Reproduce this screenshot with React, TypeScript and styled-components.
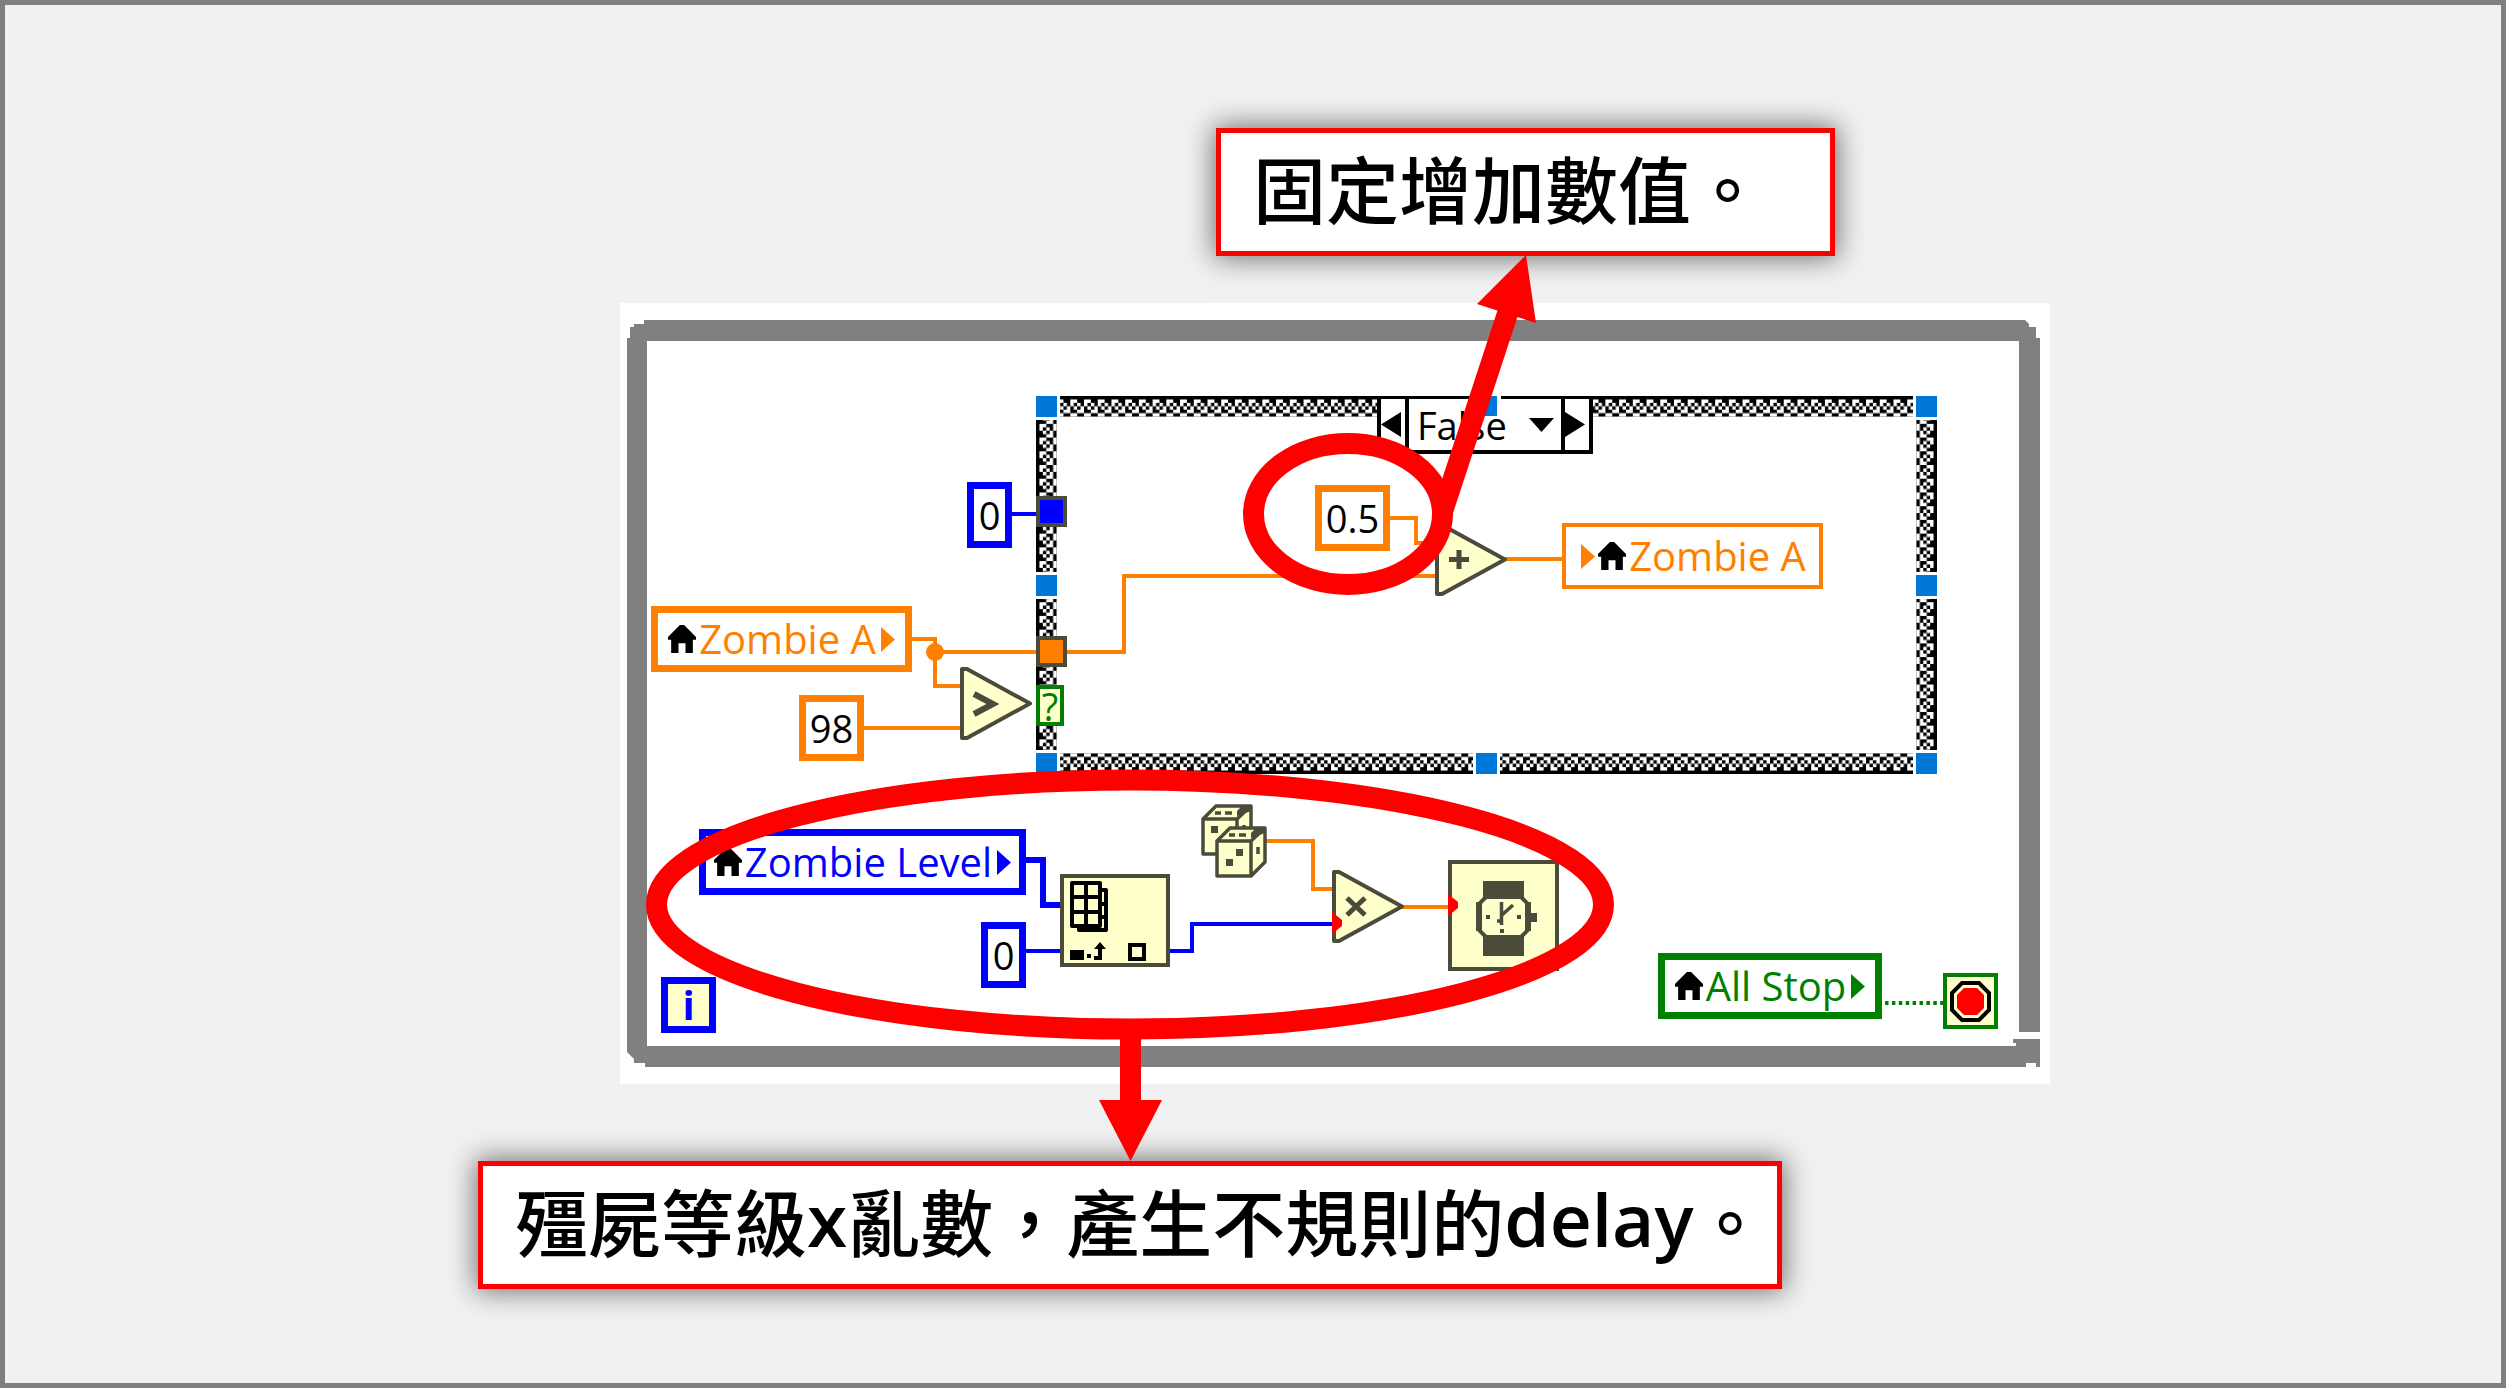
import React from "react";
import styled, { createGlobalStyle, css } from "styled-components";

const colors = {
  orange: "#ff7f00",
  blue: "#0000ff",
  green: "#007f00",
  ink: "#4b4b3c",
  cream: "#ffffcc",
  frame: "#808080",
  red: "#ff0000",
  handle: "#0078d7",
};

const GlobalStyle = createGlobalStyle`
  *, *::before, *::after { box-sizing: border-box; }
  body { margin: 0; background: #f1f1f1; }
`;

const Slide = styled.main`
  display: flex;
  justify-content: center;
  min-height: 100vh;
  padding: 123px 0 0;
  border: 5px solid #7f7f7f;
  background: #f1f1f1;
  overflow: hidden;
`;

const Stage = styled.div`
  display: flex;
  flex-direction: column;
  align-items: flex-start;
  padding-left: 22px;
`;

const Callout = styled.p<{ $wide?: boolean }>`
  display: flex;
  align-items: center;
  height: 128px;
  margin: 0;
  margin-left: ${(p) => (p.$wide ? 0 : 738)}px;
  padding: 0 ${(p) => (p.$wide ? 10 : 66)}px 12px 32px;
  border: 5px solid ${colors.red};
  background: #ffffff;
  box-shadow: 0 0 26px 2px rgba(0, 0, 0, 0.55);
  color: #000000;
  font-family: "Open Sans", "Noto Sans CJK TC", sans-serif;
  font-size: 73px;
  font-weight: 600;
  line-height: 100px;
  white-space: nowrap;
`;

const Cjk = styled.span`
  font-family: "Noto Sans CJK TC", sans-serif;
  font-weight: 500;
`;

const Diagram = styled.section`
  position: relative;
  width: 1430px;
  height: 781px;
  margin: 47px 0 77px 142px;
  background: #ffffff;
`;

const Drawing = styled.svg`
  position: absolute;
  inset: 0;
  width: 100%;
  height: 100%;
  overflow: visible;
  pointer-events: none;
`;

const nodeText = css`
  font-family: "Open Sans", sans-serif;
  line-height: 40px;
  white-space: nowrap;
`;

const Node = styled.div<{ $x: number; $y: number; $w: number; $color: string; $thin?: boolean }>`
  ${nodeText}
  position: absolute;
  left: ${(p) => p.$x}px;
  top: ${(p) => p.$y}px;
  display: flex;
  align-items: center;
  justify-content: center;
  gap: 3px;
  width: ${(p) => p.$w}px;
  height: 66px;
  border: ${(p) => (p.$thin ? 4 : 7)}px solid ${(p) => p.$color};
  background: #ffffff;
  color: ${(p) => p.$color};
  font-size: 40px;
`;

const Constant = styled(Node)`
  color: #000000;
  font-size: 38px;
`;

const Terminal = styled.div<{ $x: number; $y: number; $color: string; $border: number }>`
  ${nodeText}
  position: absolute;
  left: ${(p) => p.$x}px;
  top: ${(p) => p.$y}px;
  display: flex;
  align-items: center;
  justify-content: center;
  width: 55px;
  height: 56px;
  border: ${(p) => p.$border}px solid ${(p) => p.$color};
  background: ${colors.cream};
  color: ${(p) => p.$color};
  font-size: 40px;
  font-weight: 700;
`;

const CaseInput = styled.div`
  ${nodeText}
  position: absolute;
  left: 416px;
  top: 382px;
  display: flex;
  align-items: center;
  justify-content: center;
  width: 28px;
  height: 41px;
  border: 4px solid ${colors.green};
  background: ${colors.cream};
  color: ${colors.green};
  font-size: 38px;
`;

const Selector = styled.div`
  position: absolute;
  left: 757px;
  top: 93px;
  display: flex;
  width: 216px;
  height: 58px;
  border: 4px solid #000000;
  border-top-width: 3px;
  background: #ffffff;
`;

const Step = styled.button`
  display: flex;
  align-items: center;
  justify-content: flex-start;
  width: 24px;
  padding: 0;
  border: 0;
  background: #ffffff;
`;

const CaseField = styled.label`
  position: relative;
  display: flex;
  flex: 1;
  border: solid #000000;
  border-width: 0 4px;
`;

const CaseSelect = styled.select`
  ${nodeText}
  flex: 1;
  width: 100%;
  padding: 0 0 0 8px;
  border: 0;
  appearance: none;
  background: transparent;
  color: #000000;
  font-size: 38px;
`;

const DropMark = styled.svg`
  position: absolute;
  top: 19px;
  right: 7px;
`;

const House = () => (
  <svg width="28" height="28" viewBox="0 0 8 8" aria-hidden="true">
    <path d="M3.4 0h1.2L8 3.4v.8H7.1V8H5V5.2H3V8H.9V4.2H0v-.8z" fill="#000" />
  </svg>
);

const PlayMark = styled.svg`
  margin-left: 2px;
`;

const Play = ({ color }: { color: string }) => (
  <PlayMark width="14" height="25" viewBox="0 0 14 25" aria-hidden="true">
    <path d="M0 0L14 12.5L0 25z" fill={color} />
  </PlayMark>
);

const Amplifier = ({ x, y }: { x: number; y: number }) => (
  <path
    d={`M${x + 2} ${y + 2}h5L${x + 70} ${y + 36.5}L${x + 7} ${y + 71}h-5z`}
    fill={colors.cream}
    stroke={colors.ink}
    strokeWidth="4"
    strokeLinejoin="round"
  />
);

const Wire = ({ d, color, width = 4 }: { d: string; color: string; width?: number }) => (
  <path d={d} fill="none" stroke={color} strokeWidth={width} />
);

const Handle = ({ x, y }: { x: number; y: number }) => (
  <>
    <rect x={x - 3} y={y - 1} width="27" height="23" fill="#fff" />
    <rect x={x - 1} y={y - 3} width="23" height="27" fill="#fff" />
    <rect x={x} y={y} width="21" height="21" fill={colors.handle} />
  </>
);

const Die = ({ x, y, pips }: { x: number; y: number; pips: [number, number][] }) => (
  <g transform={`translate(${x} ${y})`} stroke={colors.ink} strokeWidth="3.5" strokeLinejoin="round">
    <path d="M2 15L15 2H50V36L36 50H2z" fill={colors.cream} />
    <path d="M2 15H36V50M36 15L50 2" fill="none" />
    <path d="M36 12V7l5-5h9v5z" fill={colors.ink} stroke="none" />
    <path d="M14 9H20M24 9H31" fill="none" />
    <path d="M43 21v7" fill="none" />
    {pips.map(([px, py]) => (
      <rect key={`${px}-${py}`} x={px} y={py} width="7" height="7" fill={colors.ink} stroke="none" />
    ))}
  </g>
);

const LoopFrame = () => (
  <path
    fill={colors.frame}
    d="M24 17H1405L1409 21V24H1416V35H1420V729H1399V38H27V743H1396V740H1393V736H1420V764H1416V760H1406V764H25V760H14V756L7 749V35H10V24H14V21H24z"
  />
);

const weave =
  "M0 0h4v1h-4zM0 1h2v1h-2zM1 2h1v1h-1zM3 2h1v1h-1zM0 3h1v1h-1zM2 3h1v1h-1zM2 4h2v1h-2zM0 5h2v1h-2z";

const CaseFrame = () => (
  <>
    <defs>
      <pattern id="weave" width="4" height="6" patternUnits="userSpaceOnUse">
        <path d={weave} fill="#000" />
      </pattern>
    </defs>
    <g fill="url(#weave)">
      <rect width="257" height="6" transform="translate(416 93) scale(3.43)" />
      <rect width="257" height="6" transform="translate(416 471) scale(3.43 -3.43)" />
      <rect width="104" height="6" transform="matrix(0 3.43 3.43 0 416 114)" />
      <rect width="104" height="6" transform="matrix(0 3.43 -3.43 0 1317 114)" />
    </g>
    {[93, 272, 450].map((y) => (
      <React.Fragment key={y}>
        <Handle x={416} y={y} />
        <Handle x={1296} y={y} />
      </React.Fragment>
    ))}
    <Handle x={856} y={450} />
  </>
);

const IndexArray = () => (
  <g>
    <rect x="442" y="573" width="106" height="89" fill={colors.cream} stroke={colors.ink} strokeWidth="4" />
    <g fill="none" stroke="#000" strokeWidth="4" strokeLinejoin="round">
      <path d="M481 587H486V627H459V621M473 621V627M481 601H486M481 614H486" />
      <path d="M452 580H480V623H452zM466 580V623M452 594H480M452 609H480" />
      <rect x="510" y="642" width="14" height="14" strokeLinejoin="miter" />
    </g>
    <path d="M450 647h14v10h-14zM467 651h4v4h-4z" />
    <path d="M474 655H480V645" fill="none" stroke="#000" strokeWidth="4" />
    <path d="M480 639L486 646H474z" />
  </g>
);

const Watch = () => (
  <g>
    <rect x="830" y="559" width="107" height="107" fill={colors.cream} stroke={colors.ink} strokeWidth="4" />
    <rect x="863" y="578" width="41" height="18" fill={colors.ink} />
    <rect x="863" y="633" width="41" height="20" fill={colors.ink} />
    <path d="M866 594H901L909 602V626L901 634H866L858 626V602z" fill={colors.cream} stroke={colors.ink} strokeWidth="4" />
    <path d="M859 599V628M908 599V628" stroke={colors.ink} strokeWidth="6" />
    <rect x="911" y="610" width="6" height="9" fill={colors.ink} />
    <path d="M881.5 599V622M877 618H882M882 612L893 602" stroke={colors.ink} strokeWidth="3.5" />
    <path d="M866 612h4v4h-4zM897 612h4v4h-4zM880 626h4v4h-4z" fill={colors.ink} />
  </g>
);

const CoercionDot = ({ x, y }: { x: number; y: number }) => (
  <path d={`M${x} ${y}L${x + 10} ${y + 8}V${y + 14}L${x} ${y + 22}z`} fill={colors.red} />
);

export default function App() {
  return (
    <>
      <GlobalStyle />
      <Slide lang="zh-Hant">
        <Stage>
          <Callout><Cjk>固定增加數值。</Cjk></Callout>

          <Diagram>
            <Drawing viewBox="0 0 1430 781" aria-hidden="true">
              <LoopFrame />
              <CaseFrame />

              <Wire color={colors.orange} d="M290 336H315V383H342M315 349H504V273H818" />
              <circle cx="315" cy="349" r="9" fill={colors.orange} />
              <Wire color={colors.orange} d="M243 425H342" />
              <Wire color={colors.orange} d="M769 215H796V240H818" />
              <Wire color={colors.orange} d="M884 256H944" />
              <Wire color={colors.blue} d="M390 211H418" />
              <Wire color={colors.blue} width={6} d="M404 557H423V602H442" />
              <Wire color={colors.blue} d="M404 648H442M548 648H572V621H714" />
              <Wire color={colors.orange} d="M645 538H693V586H714" />
              <Wire color={colors.orange} d="M782 604H830" />
              <path d="M1265 700H1323" stroke={colors.green} strokeWidth="4" strokeDasharray="3.5 3.4" />

              <rect x="418" y="195" width="27" height="27" fill={colors.blue} stroke={colors.ink} strokeWidth="4" />
              <rect x="418" y="335" width="27" height="27" fill={colors.orange} stroke={colors.ink} strokeWidth="4" />

              <Amplifier x={340} y={364} />
              <path d="M354 391L373 401L354 411" fill="none" stroke={colors.ink} strokeWidth="6" />
              <Amplifier x={815} y={220} />
              <path d="M829 256.5H849M839 247V266" stroke={colors.ink} strokeWidth="5" />
              <Amplifier x={712} y={567} />
              <path d="M727 595L745 612M745 595L727 612" stroke={colors.ink} strokeWidth="5" />

              <Die x={581} y={501} pips={[[10, 22]]} />
              <Die x={595} y={523} pips={[[21, 23], [11, 33]]} />
              <IndexArray />
              <Watch />
              <CoercionDot x={712} y={609} />
              <CoercionDot x={828} y={591} />
            </Drawing>

            <Constant $x={347} $y={179} $w={45} $color={colors.blue}>0</Constant>
            <Node $x={31} $y={303} $w={261} $color={colors.orange}>
              <House />Zombie A<Play color={colors.orange} />
            </Node>
            <Constant $x={179} $y={392} $w={65} $color={colors.orange}>98</Constant>
            <CaseInput>?</CaseInput>

            <Selector>
              <Step type="button" aria-label="Previous case">
                <svg width="20" height="25" viewBox="0 0 20 25" aria-hidden="true">
                  <path d="M20 0V25L0 12.5z" />
                </svg>
              </Step>
              <CaseField>
                <CaseSelect aria-label="Case" defaultValue="False">
                  <option>False</option>
                </CaseSelect>
                <DropMark width="25" height="14" viewBox="0 0 25 14" aria-hidden="true">
                  <path d="M0 0H25L12.5 14z" />
                </DropMark>
              </CaseField>
              <Step type="button" aria-label="Next case">
                <svg width="20" height="25" viewBox="0 0 20 25" aria-hidden="true">
                  <path d="M0 0V25L20 12.5z" />
                </svg>
              </Step>
            </Selector>

            <Constant $x={695} $y={182} $w={75} $color={colors.orange}>0.5</Constant>
            <Node $x={942} $y={220} $w={261} $color={colors.orange} $thin>
              <Play color={colors.orange} /><House />Zombie A
            </Node>

            <Node $x={79} $y={526} $w={327} $color={colors.blue}>
              <House />Zombie Level<Play color={colors.blue} />
            </Node>
            <Constant $x={361} $y={619} $w={45} $color={colors.blue}>0</Constant>
            <Terminal $x={41} $y={674} $color={colors.blue} $border={7}>i</Terminal>

            <Node $x={1038} $y={650} $w={224} $color={colors.green}>
              <House />All Stop<Play color={colors.green} />
            </Node>
            <Terminal $x={1323} $y={670} $color={colors.green} $border={4}>
              <svg width="41" height="41" viewBox="0 0 41 41" aria-hidden="true">
                <path d="M12 2H29L39 12V29L29 39H12L2 29V12z" fill="none" stroke="#000" strokeWidth="4" />
                <path d="M14 7H27L34 14V27L27 34H14L7 27V14z" fill="#f00" />
              </svg>
            </Terminal>

            <Drawing viewBox="0 0 1430 781" aria-hidden="true">
              <rect x="856" y="93" width="21" height="20" fill={colors.handle} />
              <rect x="877" y="93" width="4" height="3" fill="#fff" />
              <g fill="none" stroke={colors.red} strokeWidth="21">
                <ellipse cx="728" cy="211" rx="94.5" ry="70.5" />
                <ellipse cx="510" cy="601.5" rx="473.5" ry="124.5" />
                <path d="M822 210L890 3M510.5 726V800" />
              </g>
              <path d="M906 -48L857 1L916 20zM479 797H542L510.5 858z" fill={colors.red} />
            </Drawing>
          </Diagram>

          <Callout $wide>
            <Cjk>殭屍等級</Cjk>x<Cjk>亂數，產生不規則的</Cjk>delay<Cjk>。</Cjk>
          </Callout>
        </Stage>
      </Slide>
    </>
  );
}
